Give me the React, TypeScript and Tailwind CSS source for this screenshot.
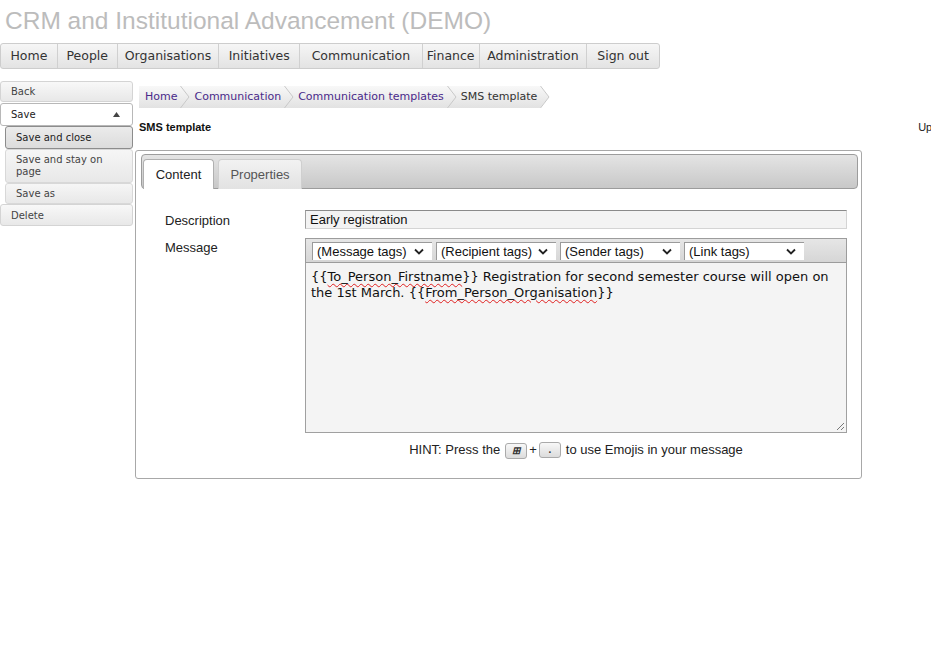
const navItems = [
  { label: 'Home', w: 'w-[56px]' },
  { label: 'People', w: 'w-[60px]' },
  { label: 'Organisations', w: 'w-[102px]' },
  { label: 'Initiatives', w: 'w-[81px]' },
  { label: 'Communication', w: 'w-[123px]' },
  { label: 'Finance', w: 'w-[57px]' },
  { label: 'Administration', w: 'w-[108px]' },
  { label: 'Sign out', w: 'w-[73px]' },
];

const crumbs = ['Home', 'Communication', 'Communication templates', 'SMS template'];

const tagSelects = ['(Message tags)', '(Recipient tags)', '(Sender tags)', '(Link tags)'];

function Chevron({ last }: { last?: boolean }) {
  return (
    <svg width="10" height="22" viewBox="0 0 10 22" className="shrink-0 block">
      {last && <polygon points="0,0 10,0 10,22 0,22 9,11" fill="#ffffff" />}
      <polyline points="0.5,0 9,11 0.5,22" fill="none" stroke="#c8c8c8" strokeWidth="1" />
    </svg>
  );
}

function FakeSelect({ label }: { label: string }) {
  return (
    <div className="w-[120px] h-[18px] bg-white border-l border-t border-[#9a9a9a] flex items-center justify-between pl-[4px] pr-[8px] text-[13px] text-[#111] leading-none">
      <span>{label}</span>
      <svg width="10" height="7" viewBox="0 0 10 7">
        <polyline points="1,1.5 5,5.5 9,1.5" fill="none" stroke="#222" strokeWidth="1.8" />
      </svg>
    </div>
  );
}

function Key({ children }: { children: React.ReactNode }) {
  return (
    <span className="inline-flex items-center justify-center w-[22px] h-[16px] mx-[2px] rounded-[3px] border border-[#aaa] bg-gradient-to-b from-[#f8f8f8] to-[#dcdcdc] text-[10px] font-bold text-[#333] align-middle leading-none">
      {children}
    </span>
  );
}

export default function App() {
  return (
    <div className="min-h-screen w-[931px] overflow-hidden bg-white font-['Liberation_Sans',Arial,sans-serif]">
      {/* Title */}
      <div className="h-[43px] pt-[6px] pl-[5px]">
        <h1 className="text-[24.5px] leading-[30px] text-[#bcbcbc] whitespace-nowrap">CRM and Institutional Advancement (DEMO)</h1>
      </div>

      {/* Nav */}
      <div className="flex w-[660px] h-[26px] border border-[#cdcdcd] rounded-[3px] bg-gradient-to-b from-[#f6f6f6] to-[#e3e3e3] font-['DejaVu_Sans',Verdana,sans-serif] text-[12.5px] text-[#333]">
        {navItems.map((n, i) => (
          <div key={n.label} className={`${n.w} flex items-center justify-center pt-[1px] ${i > 0 ? 'border-l border-[#d0d0d0]' : ''}`}>
            {n.label}
          </div>
        ))}
      </div>

      <div className="flex mt-[12px]">
        {/* Sidebar */}
        <div className="w-[133px] shrink-0 flex flex-col font-['DejaVu_Sans',Verdana,sans-serif] text-[10px] text-[#444]">
          <div className="h-[21px] flex items-center pl-[10px] border border-[#d4d4d4] rounded-[3px] bg-gradient-to-b from-[#f8f8f8] to-[#e8e8e8]">Back</div>
          <div className="mt-[1px] h-[23px] flex items-center justify-between pl-[10px] pr-[12px] border border-[#b8b8b8] rounded-[3px] bg-white text-[#222]">
            <span>Save</span>
            <svg width="7" height="5" viewBox="0 0 7 5"><polygon points="0,5 3.5,0 7,5" fill="#444" /></svg>
          </div>
          <div className="ml-[5px] flex flex-col">
            <div className="h-[23px] flex items-center pl-[10px] border border-[#8c8c8c] rounded-[3px] bg-gradient-to-b from-[#ebebeb] to-[#dcdcdc] text-[#222]">Save and close</div>
            <div className="h-[34px] flex items-center pl-[10px] pr-[6px] leading-[12px] border border-[#d8d8d8] rounded-[3px] bg-gradient-to-b from-[#f6f6f6] to-[#e8e8e8]">Save and stay on page</div>
            <div className="h-[21px] flex items-center pl-[10px] border border-[#d8d8d8] rounded-[3px] bg-gradient-to-b from-[#f6f6f6] to-[#e8e8e8]">Save as</div>
          </div>
          <div className="h-[22px] flex items-center pl-[10px] border border-[#d4d4d4] rounded-[3px] bg-gradient-to-b from-[#f8f8f8] to-[#e8e8e8]">Delete</div>
        </div>

        {/* Main */}
        <div className="ml-[2px] flex flex-col">
          {/* Breadcrumb */}
          <div className="ml-[4px] mt-[5px] inline-flex self-start h-[22px] bg-gradient-to-b from-[#f8f8f8] to-[#e2e2e2] font-['DejaVu_Sans',Verdana,sans-serif] text-[11px]">
            {crumbs.map((c, i) => (
              <div key={c} className="flex items-center">
                <span className={`${i === 0 ? 'pl-[6px]' : 'pl-[4px]'} pr-[3px] ${i === crumbs.length - 1 ? 'text-[#333]' : 'text-[#4a2a8a]'}`}>{c}</span>
                <Chevron last={i === crumbs.length - 1} />
              </div>
            ))}
          </div>

          {/* Heading */}
          <div className="flex w-[900px] mt-[12px] ml-[4px] text-[11px] leading-[14px] text-[#111]">
            <span className="font-bold">SMS template</span>
            <span className="ml-[707px] whitespace-nowrap text-[#222]">Updated</span>
          </div>

          {/* Panel */}
          <div className="mt-[16px] w-[727px] border border-[#a8a8a8] rounded-[3px] pt-[3px] pl-[5px] pr-[3px] pb-[19px]">
            <div className="h-[35px] border border-[#9c9c9c] rounded-[4px] bg-gradient-to-b from-[#e4e4e4] to-[#c8c8c8] flex items-end pl-[1px] text-[13px]">
              <div className="w-[71px] h-[30px] mb-[-1px] bg-white border border-[#b0b0b0] border-b-0 rounded-t-[4px] flex items-center justify-center text-[#222]">Content</div>
              <div className="ml-[4px] w-[84px] h-[30px] mb-[-1px] bg-gradient-to-b from-[#f2f2f2] to-[#e2e2e2] border border-[#cfcfcf] border-b-0 rounded-t-[4px] flex items-center justify-center text-[#555]">Properties</div>
            </div>

            <div className="grid grid-cols-[140px_542px] pl-[24px] pt-[21px] gap-y-[9px] text-[13px] text-[#222]">
              <div className="h-[18px] flex items-center pt-[3px]">Description</div>
              <div className="h-[19px] flex items-center pl-[4px] bg-[#f3f3f3] border border-[#d4d4d4] border-t-[#8a8a8a] border-l-[#a0a0a0] text-[#111]">Early registration</div>

              <div className="pt-[2px] leading-[16px]">Message</div>
              <div className="flex flex-col">
                <div className="h-[25px] flex items-center gap-[4px] pl-[6px] border border-[#9c9c9c] bg-gradient-to-b from-[#e6e6e6] to-[#d6d6d6]">
                  {tagSelects.map((t) => (
                    <FakeSelect key={t} label={t} />
                  ))}
                </div>
                <div className="relative h-[170px] border border-t-0 border-[#a0a0a0] bg-[#f4f4f4] px-[5px] pt-[6px] font-['DejaVu_Sans',Verdana,sans-serif] text-[13px] leading-[16px] text-[#111]">
                  {'{{'}
                  <span className="underline decoration-wavy decoration-[#e02020] decoration-1 underline-offset-2">To_Person_Firstname</span>
                  {'}}'} Registration for second semester course will open on the 1st March. {'{{'}
                  <span className="underline decoration-wavy decoration-[#e02020] decoration-1 underline-offset-2">From_Person_Organisation</span>
                  {'}}'}
                  <svg width="9" height="9" viewBox="0 0 9 9" className="absolute right-[1px] bottom-[1px]">
                    <line x1="1" y1="8" x2="8" y2="1" stroke="#777" strokeWidth="1" />
                    <line x1="5" y1="8" x2="8" y2="5" stroke="#777" strokeWidth="1" />
                  </svg>
                </div>
                <div className="mt-[8px] h-[18px] flex items-center justify-center text-[13px] text-[#222]">
                  HINT: Press the
                  <span className="ml-[3px]"><Key><span className="italic">⊞</span></Key></span>
                  +
                  <Key>.</Key>
                  <span className="ml-[3px]">to use Emojis in your message</span>
                </div>
              </div>
            </div>
          </div>
        </div>
      </div>
    </div>
  );
}
